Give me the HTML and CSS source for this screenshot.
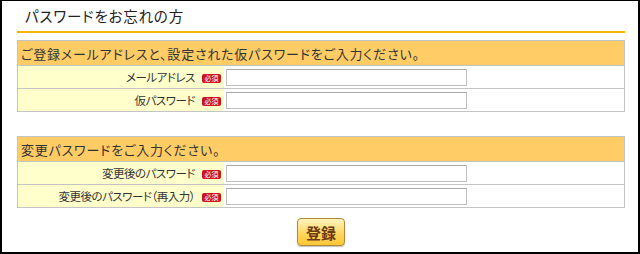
FILE: index.html
```html
<!DOCTYPE html>
<html lang="ja">
  <head>
    <meta charset="UTF-8" />
    <meta name="viewport" content="width=device-width, initial-scale=1.0" />
    <title>パスワードをお忘れの方</title>
    <link rel="stylesheet" href="styles.css">
  </head>
  <body>
    <div class="frame">
      <h1 class="title">パスワードをお忘れの方</h1>

      <table class="form-table">
        <tr>
          <th colspan="2">ご登録メールアドレスと、設定された仮パスワードをご入力ください。</th>
        </tr>
        <tr>
          <td class="label">メールアドレス <span class="req">必須</span></td>
          <td class="field"><input type="text" class="text-input" /></td>
        </tr>
        <tr>
          <td class="label">仮パスワード <span class="req">必須</span></td>
          <td class="field"><input type="password" class="text-input" /></td>
        </tr>
      </table>

      <table class="form-table second">
        <tr>
          <th colspan="2">変更パスワードをご入力ください。</th>
        </tr>
        <tr>
          <td class="label">変更後のパスワード <span class="req">必須</span></td>
          <td class="field"><input type="password" class="text-input" /></td>
        </tr>
        <tr>
          <td class="label">変更後のパスワード（再入力） <span class="req">必須</span></td>
          <td class="field"><input type="password" class="text-input" /></td>
        </tr>
      </table>

      <div class="actions">
        <button class="submit">登録</button>
      </div>
    </div>
  </body>
</html>
```

FILE: styles.css
```css
body {
  margin: 0;
  background-color: white;
  font-family: "Noto Sans CJK JP", sans-serif;
  font-feature-settings: "palt";
  color: #333;
}

.frame {
  box-sizing: border-box;
  height: 254px;
  border-left: 2px solid #000;
  border-top: 1px solid #000;
  border-right: 2px solid #000;
  border-bottom: 2px solid #000;
  padding: 0 13px 0 15px;
}

.title {
  margin: 0;
  height: 30px;
  padding-left: 8px;
  border-bottom: 2px solid #f7b500;
  font-size: 14.5px;
  font-weight: normal;
  line-height: 30px;
  letter-spacing: 0.8px;
  color: #222;
}

.form-table {
  width: 100%;
  margin-top: 7px;
  border-collapse: collapse;
  border: 1px solid #c4c4c4;
  font-size: 12.5px;
}

.form-table.second {
  margin-top: 24px;
}

.form-table th {
  height: 24px;
  padding: 0 0 0 3px;
  background-color: #ffcc66;
  border-bottom: 1px solid #c4c4c4;
  text-align: left;
  font-weight: normal;
  font-size: 13px;
  letter-spacing: 0.8px;
  color: #333;
}

.form-table td {
  height: 22px;
  padding: 0;
  border-bottom: 1px solid #c4c4c4;
}

.label {
  width: 203px;
  padding-right: 3px !important;
  background-color: #ffffcc;
  text-align: right;
  font-size: 11.5px;
  letter-spacing: -0.5px;
  white-space: nowrap;
}

.req {
  display: inline-block;
  width: 19px;
  height: 9px;
  margin-left: 5px;
  border-radius: 2px;
  background-color: #c8141e;
  color: white;
  font-size: 7px;
  line-height: 9px;
  letter-spacing: 0;
  text-align: center;
  vertical-align: 1px;
}

.field {
  padding-left: 2px !important;
}

.text-input {
  display: block;
  box-sizing: border-box;
  width: 241px;
  height: 17px;
  margin: 0;
  padding: 0 2px;
  border: 1px solid #c0c0c0;
  border-top-color: #a8a8a8;
  background: white;
}

.actions {
  display: flex;
  justify-content: center;
  margin-top: 10px;
}

.submit {
  width: 48px;
  height: 28px;
  padding: 0;
  border: 1px solid #b08a3a;
  border-radius: 4px;
  background: linear-gradient(#fff5c0, #ffd45a 60%, #ffc637);
  box-shadow: 0 1px 1px rgba(0, 0, 0, 0.25);
  font-family: "Noto Sans CJK JP", sans-serif;
  font-size: 15px;
  font-weight: bold;
  color: #6b3a10;
  cursor: pointer;
}
```
